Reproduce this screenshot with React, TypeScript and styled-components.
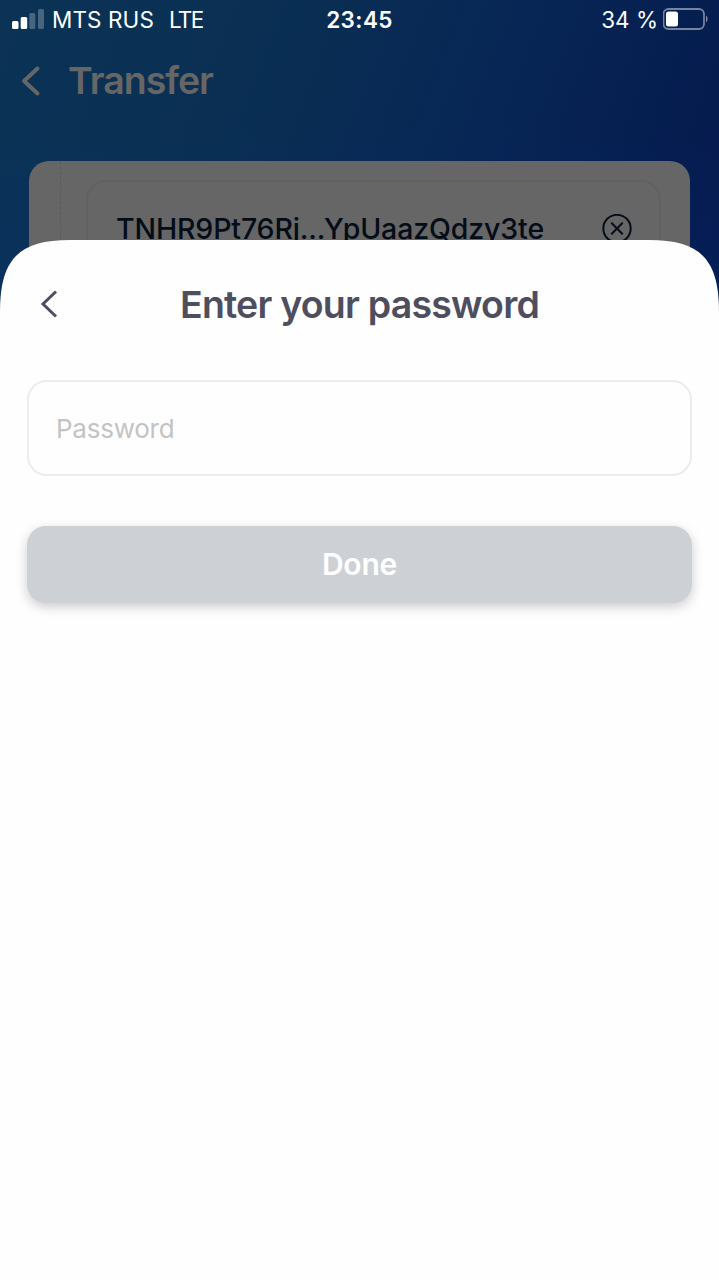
import React from 'react';
import styled, { createGlobalStyle } from 'styled-components';

const GlobalStyle = createGlobalStyle`
  * { box-sizing: border-box; }
  body { margin: 0; font-family: Inter, "Liberation Sans", sans-serif; }
  button, input { font-family: inherit; }
`;

const Screen = styled.main`
  position: relative;
  width: 719px;
  height: 1280px;
  overflow: hidden;
  background:
    linear-gradient(180deg, rgba(0, 50, 130, 0) 35%, rgba(0, 50, 130, 0.16) 90%) top / 100% 340px no-repeat,
    linear-gradient(112deg, #0b3356 0%, #0a2f53 32%, #072655 62%, #051c4f 88%, #051b4f 100%) top / 100% 340px no-repeat;
`;

const StatusBar = styled.header`
  display: grid;
  grid-template-columns: 1fr auto 1fr;
  align-items: center;
  height: 40px;
  padding: 0 10px 0 12px;
  color: #fff;
`;

const StatusGroup = styled.div<{ $end?: boolean }>`
  display: flex;
  align-items: center;
  justify-content: ${(p) => (p.$end ? 'flex-end' : 'flex-start')};
`;

const SignalBars = styled.svg`
  margin-top: -2px;
`;

const StatusText = styled.span<{ $gap: number; $spacing?: number }>`
  margin-left: ${(p) => p.$gap}px;
  font-size: 22.5px;
  line-height: 40px;
  letter-spacing: ${(p) => p.$spacing ?? 0}px;
  white-space: nowrap;
`;

const Clock = styled.time`
  margin-left: -2px;
  font-size: 22.5px;
  font-weight: 600;
  line-height: 40px;
  letter-spacing: 0.4px;
`;

const Battery = styled.svg`
  margin: -2px 0 0 5px;
`;

const PageHeader = styled.div`
  display: flex;
  align-items: center;
  height: 82px;
  padding-left: 20px;
  gap: 27px;
  color: #666;
`;

const PageTitle = styled.h1`
  margin: -2px 0 0;
  font-size: 37.5px;
  font-weight: 600;
  letter-spacing: -1px;
`;

const Card = styled.section`
  display: flex;
  height: 200px;
  margin: 39px 29px 0;
  padding: 19px 29px 0 31px;
  border-radius: 20px;
  background: #666;
`;

const Timeline = styled.div`
  width: 26px;
  margin-top: -19px;
  border-left: 1px dashed #5b5b5b;
`;

const AddressField = styled.div`
  display: flex;
  flex: 1;
  align-items: center;
  justify-content: space-between;
  height: 97px;
  padding: 0 27px 0 28px;
  border: 2px solid #616161;
  border-radius: 20px;
  color: #040c18;
`;

const Address = styled.span`
  font-size: 28.5px;
  font-weight: 500;
  letter-spacing: -0.13px;
  white-space: nowrap;
`;

const Sheet = styled.section`
  position: absolute;
  inset: 240px 0 0;
  padding: 0 27px;
  clip-path: path('M0 72C0 20 18 0 70 0H649C701 0 719 20 719 72V1040H0Z');
  background: #fefefe;
`;

const SheetHeader = styled.div`
  display: grid;
  grid-template-columns: 40px 1fr 40px;
  align-items: center;
  height: 128px;
`;

const BackButton = styled.button`
  display: flex;
  padding: 0 0 0 12px;
  border: 0;
  background: none;
  color: #4f4e5e;
`;

const SheetTitle = styled.h2`
  margin: 0;
  color: #4f4e5e;
  font-size: 37.5px;
  font-weight: 600;
  letter-spacing: -0.8px;
  text-align: center;
  white-space: nowrap;
`;

const PasswordInput = styled.input`
  display: block;
  width: 100%;
  height: 96px;
  margin-top: 12px;
  padding: 0 27px;
  border: 2px solid #ececee;
  border-radius: 20px;
  outline: 0;
  background: #fefefe;
  font-size: 26px;
  letter-spacing: -0.25px;
  &::placeholder {
    color: #c3c3c5;
    opacity: 1;
  }
`;

const DoneButton = styled.button`
  display: block;
  width: 100%;
  height: 77px;
  margin-top: 50px;
  padding: 0 0 2px;
  border: 0;
  border-radius: 19px;
  background: #cdd1d5;
  box-shadow: 0 4px 12px rgba(0, 0, 0, 0.2);
  color: #fff;
  font-size: 30px;
  font-weight: 600;
  letter-spacing: -0.2px;
`;

export default function App() {
  return (
    <>
      <GlobalStyle />
      <Screen>
        <StatusBar>
          <StatusGroup>
            <SignalBars width="32" height="20" viewBox="0 0 32 20" fill="#fff">
              <rect x="0" y="12" width="6.5" height="8" rx="1.5" />
              <rect x="8.7" y="8" width="6.5" height="12" rx="1.5" />
              <rect x="17.3" y="4" width="6" height="16" rx="1.5" opacity=".25" />
              <rect x="26" y="0" width="6" height="20" rx="1.5" opacity=".25" />
            </SignalBars>
            <StatusText $gap={8} $spacing={0.1}>MTS RUS</StatusText>
            <StatusText $gap={15} $spacing={-1.7}>LTE</StatusText>
          </StatusGroup>
          <Clock>23:45</Clock>
          <StatusGroup $end>
            <StatusText $gap={0}>34 %</StatusText>
            <Battery width="46" height="22" viewBox="0 0 46 22" fill="none">
              <rect x="0.5" y="1" width="40.5" height="20" rx="5" stroke="#fff" strokeOpacity=".45" strokeWidth="1.8" />
              <rect x="3" y="3.5" width="12" height="15" rx="2.5" fill="#fff" />
              <path d="M43 7.5C45 9 45 13 43 14.5Z" fill="#fff" fillOpacity=".5" />
            </Battery>
          </StatusGroup>
        </StatusBar>
        <PageHeader>
          <svg width="21" height="32" viewBox="0 0 21 32" fill="none" stroke="currentColor" strokeWidth="4" strokeLinecap="round" strokeLinejoin="round">
            <path d="M17.5 3.5 4 16l13.500 12.500" />
          </svg>
          <PageTitle>Transfer</PageTitle>
        </PageHeader>
        <Card>
          <Timeline />
          <AddressField>
            <Address>TNHR9Pt76Rj...YpUaazQdzy3te</Address>
            <svg width="30" height="30" viewBox="0 0 30 30" fill="none" stroke="currentColor" strokeWidth="2" strokeLinecap="round">
              <circle cx="15" cy="14.500" r="13.700" />
              <path d="m9.800 9.300 10.400 10.400M20.200 9.300 9.800 19.700" />
            </svg>
          </AddressField>
        </Card>
        <Sheet>
          <SheetHeader>
            <BackButton aria-label="Back">
              <svg width="20" height="30" viewBox="0 0 20 30" fill="none" stroke="currentColor" strokeWidth="3">
                <path d="M17 2.500 4 15l13 12.500" />
              </svg>
            </BackButton>
            <SheetTitle>Enter your password</SheetTitle>
          </SheetHeader>
          <PasswordInput type="password" placeholder="Password" />
          <DoneButton>Done</DoneButton>
        </Sheet>
      </Screen>
    </>
  );
}
